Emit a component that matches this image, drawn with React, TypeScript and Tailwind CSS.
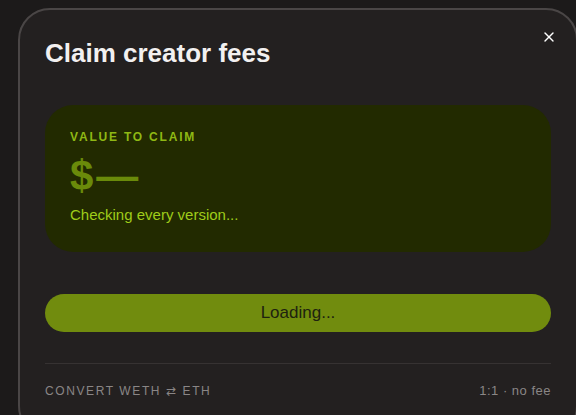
import { X } from 'lucide-react';

export default function App() {
  return (
    <div
      className="h-[415px] w-[576px] overflow-hidden bg-[#1c1a1a] pt-[8px] pl-[18px]"
      style={{ fontFamily: '"Liberation Sans", Arial, sans-serif' }}
    >
      <div className="relative h-[430px] w-[560px] rounded-[32px] border-2 border-[#4a4646] bg-[#232020] px-[25px] pt-[27px]">
        <button className="absolute top-[19px] right-[19px] text-white">
          <X className="h-[16px] w-[16px]" strokeWidth={2} />
        </button>

        <h2 className="text-[26px] leading-[32px] font-bold text-[#f2f0f0]">
          Claim creator fees
        </h2>

        {/* value card */}
        <div className="mt-[36px] h-[147px] rounded-[28px] bg-[#222a00] px-[25px] pt-[25px]">
          <div className="text-[12px] leading-[14px] font-bold tracking-[1.8px] text-[#8fb814]">
            VALUE TO CLAIM
          </div>
          <div className="mt-[10px] text-[42px] leading-[44px] font-bold tracking-[3px] text-[#6a8a0a]">$—</div>
          <div className="mt-[8px] text-[15px] leading-[18px] text-[#9fcc1a]">
            Checking every version...
          </div>
        </div>

        <button className="mt-[42px] flex h-[38px] w-full items-center justify-center rounded-full bg-[#718c0e] text-[17px] text-[#1e2210]">
          Loading...
        </button>

        <div className="mt-[31px] border-t border-[#363232]" />

        <div className="mt-[19px] flex items-center justify-between text-[12px] leading-[16px] text-[#8a8686]">
          <span className="tracking-[1.6px]">CONVERT WETH ⇄ ETH</span>
          <span className="text-[13px] tracking-[0.5px]">1:1 · no fee</span>
        </div>
      </div>
    </div>
  );
}
